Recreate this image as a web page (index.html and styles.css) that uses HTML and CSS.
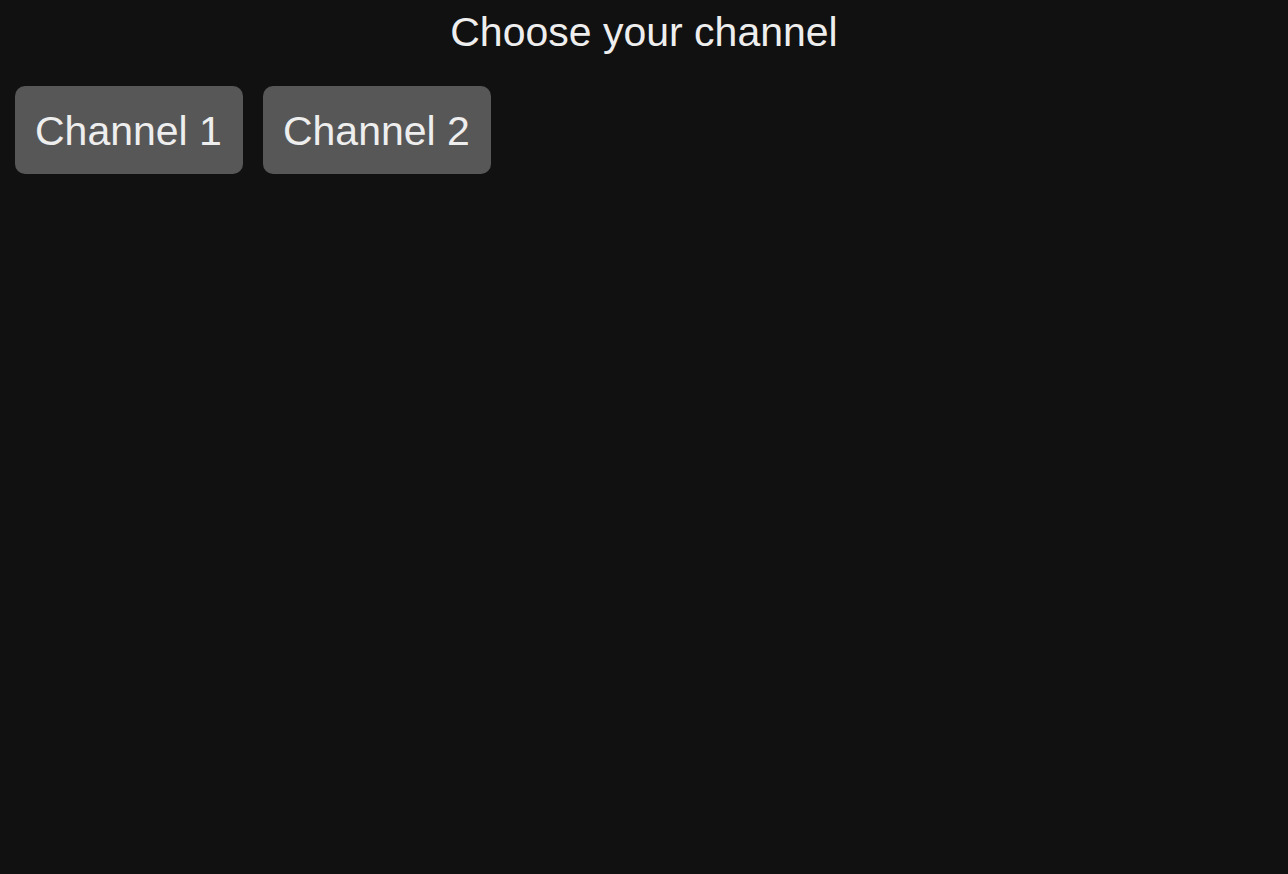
FILE: index.html
```html
<!DOCTYPE html>
<html lang="en">
<head>
<meta charset="utf-8">
<title>Choose your channel</title>
<link rel="stylesheet" href="styles.css">
</head>
<body>
<h1 class="title">Choose your channel</h1>
<div class="channels">
  <button class="channel">Channel 1</button>
  <button class="channel">Channel 2</button>
</div>
</body>
</html>
```
FILE: styles.css
```css
html, body {
  background: #111111;
}
body {
  margin: 8px;
  font-family: "Liberation Sans", Arial, Helvetica, sans-serif;
  color: #eeeeee;
}
.title {
  margin: 0;
  font-size: 41px;
  font-weight: 400;
  line-height: 48px;
  text-align: center;
}
.channels {
  display: flex;
  gap: 20px;
  margin-top: 30px;
  padding-left: 7px;
}
.channel {
  font-family: inherit;
  font-size: 41px;
  line-height: 48px;
  color: #eeeeee;
  background: #575757;
  border: none;
  border-radius: 10px;
  padding: 21px 21px 19px 20px;
  cursor: pointer;
}
```
